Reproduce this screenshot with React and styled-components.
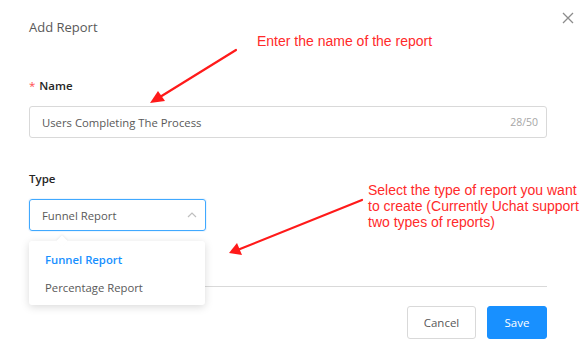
import React from 'react';
import styled, { createGlobalStyle } from 'styled-components';

const GlobalStyle = createGlobalStyle`
  html, body {
    margin: 0;
    padding: 0;
    background: #fff;
  }
  body {
    font-family: "Open Sans", "Liberation Sans", sans-serif;
    color: #262626;
  }
`;

const Modal = styled.div`
  position: relative;
  width: 587px;
  height: 362px;
  box-sizing: border-box;
  padding: 18px 40px 0 29px;
  background: #fff;
  overflow: hidden;
`;

const Title = styled.div`
  font-size: 13px;
  line-height: 18px;
  color: #595959;
`;

const CloseButton = styled.button`
  position: absolute;
  top: 11px;
  right: 12px;
  width: 14px;
  height: 14px;
  padding: 0;
  border: none;
  background: none;
  cursor: pointer;
`;

const Field = styled.div`
  margin-top: ${(p) => p.$top}px;
`;

const Label = styled.div`
  font-size: 11.5px;
  font-weight: 600;
  line-height: 16px;
  color: #262626;
  margin-bottom: 12px;
`;

const Required = styled.span`
  color: #ff4d4f;
  font-weight: 400;
  margin-right: 4px;
`;

const InputBox = styled.div`
  display: flex;
  align-items: center;
  justify-content: space-between;
  height: 32px;
  box-sizing: border-box;
  padding: 0 8px 0 12px;
  border: 1px solid #d9d9d9;
  border-radius: 3px;
  font-size: 11.3px;
  color: #595959;
`;

const Count = styled.span`
  font-size: 10.5px;
  color: #a6a6a6;
`;

const SelectWrap = styled.div`
  position: relative;
  width: 177px;
`;

const Select = styled(InputBox)`
  border-color: #40a9ff;
  box-shadow: 0 0 0 1px rgba(24, 144, 255, 0.08);
`;

const Dropdown = styled.div`
  position: absolute;
  left: 0;
  top: 42px;
  width: 176px;
  padding: 4px 0;
  background: #fff;
  border-radius: 3px;
  box-shadow: 0 2px 8px rgba(0, 0, 0, 0.15);
  z-index: 2;

  &::before {
    content: '';
    position: absolute;
    top: -4px;
    left: 29px;
    width: 8px;
    height: 8px;
    background: #fff;
    transform: rotate(45deg);
    box-shadow: -1px -1px 2px rgba(0, 0, 0, 0.06);
  }
`;

const Option = styled.div`
  position: relative;
  height: 28px;
  display: flex;
  align-items: center;
  padding: 0 16px;
  font-size: 11.3px;
  color: ${(p) => (p.$active ? '#1890ff' : '#595959')};
  font-weight: ${(p) => (p.$active ? 600 : 400)};
`;

const Footer = styled.div`
  margin-top: 55px;
  border-top: 1px solid #d9d9d9;
  padding-top: 19px;
  display: flex;
  justify-content: flex-end;
  gap: 11px;
`;

const Button = styled.button`
  width: ${(p) => p.$width}px;
  height: 33px;
  box-sizing: border-box;
  padding: 0;
  border-radius: 3px;
  font-family: inherit;
  font-size: 11.5px;
  cursor: pointer;
  border: 1px solid ${(p) => (p.$primary ? '#1890ff' : '#d9d9d9')};
  background: ${(p) => (p.$primary ? '#1890ff' : '#fff')};
  color: ${(p) => (p.$primary ? '#fff' : '#595959')};
`;

const Note = styled.div`
  position: absolute;
  left: ${(p) => p.$x}px;
  top: ${(p) => p.$y}px;
  font-family: "Liberation Sans", Arial, sans-serif;
  font-size: 14px;
  line-height: 16px;
  color: #ff2a2a;
  white-space: nowrap;
  z-index: 3;
`;

const Arrows = styled.svg`
  position: absolute;
  left: 0;
  top: 0;
  pointer-events: none;
  z-index: 3;
`;

function Chevron() {
  return (
    <svg width="10" height="10" viewBox="0 0 10 10">
      <path d="M1 7 L5 3 L9 7" fill="none" stroke="#bfbfbf" strokeWidth="1.2" />
    </svg>
  );
}

export default function App() {
  return (
    <>
      <GlobalStyle />
      <Modal>
        <Title>Add Report</Title>
        <CloseButton aria-label="close">
          <svg width="14" height="14" viewBox="0 0 14 14">
            <path d="M2 2 L12 12 M12 2 L2 12" stroke="#8c8c8c" strokeWidth="1.3" />
          </svg>
        </CloseButton>

        <Field $top={42}>
          <Label>
            <Required>*</Required>Name
          </Label>
          <InputBox>
            <span>Users Completing The Process</span>
            <Count>28/50</Count>
          </InputBox>
        </Field>

        <Field $top={33}>
          <Label>Type</Label>
          <SelectWrap>
            <Select>
              <span>Funnel Report</span>
              <Chevron />
            </Select>
            <Dropdown>
              <Option $active>Funnel Report</Option>
              <Option>Percentage Report</Option>
            </Dropdown>
          </SelectWrap>
        </Field>

        <Footer>
          <Button $width={69}>Cancel</Button>
          <Button $primary $width={60}>Save</Button>
        </Footer>

        <Note $x={257} $y={33}>Enter the name of the report</Note>
        <Note $x={368} $y={182}>
          Select the type of report you want
          <br />
          to create (Currently Uchat support
          <br />
          two types of reports)
        </Note>

        <Arrows width="587" height="362">
          <line x1="236" y1="50" x2="160" y2="97" stroke="#ff1a1a" strokeWidth="2.2" strokeLinecap="round" />
          <polygon points="150,103 158,91 165,101" fill="#ff1a1a" />
          <line x1="362" y1="200" x2="240" y2="249" stroke="#ff1a1a" strokeWidth="2.2" strokeLinecap="round" />
          <polygon points="229,253 237,243 242,255" fill="#ff1a1a" />
        </Arrows>
      </Modal>
    </>
  );
}
